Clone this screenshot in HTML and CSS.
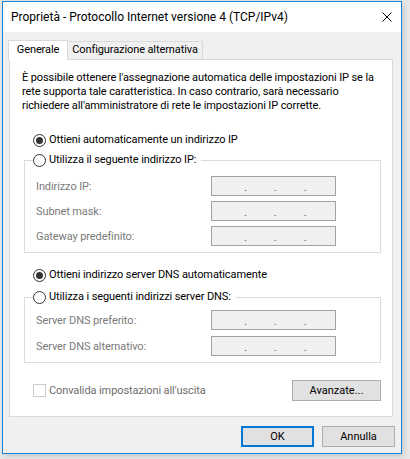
FILE: index.html
```html
<!DOCTYPE html>
<html lang="it">
  <head>
    <meta charset="UTF-8" />
    <title>Proprietà - Protocollo Internet versione 4 (TCP/IPv4)</title>
    <link rel="stylesheet" href="styles.css">
  </head>
  <body>
    <div class="dlg">
      <div class="dlg__title">
        <span>Proprietà - Protocollo Internet versione 4 (TCP/IPv4)</span>
        <svg class="dlg__close" width="10" height="10" viewBox="0 0 10 10">
          <path d="M0.5 0.5 L9.5 9.5 M9.5 0.5 L0.5 9.5" stroke="#000" stroke-width="1" fill="none" />
        </svg>
      </div>

      <div class="tabs">
        <div class="tab tab--active">Generale</div>
        <div class="tab">Configurazione alternativa</div>
      </div>

      <div class="panel">
        <p class="panel__intro">
          È possibile ottenere l'assegnazione automatica delle impostazioni IP se la<br>
          rete supporta tale caratteristica. In caso contrario, sarà necessario<br>
          richiedere all'amministratore di rete le impostazioni IP corrette.
        </p>

        <div class="opt opt--first"><span class="radio radio--on"></span>Ottieni automaticamente un indirizzo IP</div>

        <fieldset class="group group--ip">
          <legend class="opt"><span class="radio"></span>Utilizza il seguente indirizzo IP:</legend>
          <div class="field"><label>Indirizzo IP:</label><div class="ipbox"><span>.</span><span>.</span><span>.</span></div></div>
          <div class="field"><label>Subnet mask:</label><div class="ipbox"><span>.</span><span>.</span><span>.</span></div></div>
          <div class="field"><label>Gateway predefinito:</label><div class="ipbox"><span>.</span><span>.</span><span>.</span></div></div>
        </fieldset>

        <div class="opt opt--dns"><span class="radio radio--on"></span>Ottieni indirizzo server DNS automaticamente</div>

        <fieldset class="group group--dns">
          <legend class="opt"><span class="radio"></span>Utilizza i seguenti indirizzi server DNS:</legend>
          <div class="field"><label>Server DNS preferito:</label><div class="ipbox"><span>.</span><span>.</span><span>.</span></div></div>
          <div class="field"><label>Server DNS alternativo:</label><div class="ipbox"><span>.</span><span>.</span><span>.</span></div></div>
        </fieldset>

        <div class="panel__foot">
          <div class="check"><span class="check__box"></span>Convalida impostazioni all'uscita</div>
          <button class="btn btn--adv">Avanzate...</button>
        </div>
      </div>

      <div class="dlg__buttons">
        <button class="btn btn--default">OK</button>
        <button class="btn">Annulla</button>
      </div>
    </div>
  </body>
</html>
```

FILE: styles.css
```css
*,
*::before,
*::after {
  box-sizing: border-box;
  margin: 0;
  padding: 0;
}

:root {
  --accent: #1883d7;
  --face: #f0f0f0;
  --line: #d9d9d9;
  --group: #dcdcdc;
  --muted: #7a7a7a;
  --btn: #e1e1e1;
  --btn-line: #adadad;
}

body {
  background: #e9e9e9;
  font-family: Roboto, "Noto Sans", sans-serif;
  font-size: 11px;
  letter-spacing: -0.1px;
  color: #000;
  height: 459px;
  overflow: hidden;
}

.dlg {
  width: 400px;
  height: 453px;
  margin: 1px 0 0 2px;
  border: 1px solid var(--accent);
  background: var(--face);
  box-shadow: 2px 2px 6px rgba(0, 0, 0, 0.15);
  display: flex;
  flex-direction: column;
}

.dlg__title {
  height: 30px;
  background: #fff;
  display: flex;
  align-items: center;
  justify-content: space-between;
  padding: 0 9px 0 8px;
  font-size: 12px;
  letter-spacing: 0;
}

/* tabs */
.tabs {
  display: flex;
  align-items: flex-end;
  padding: 8px 0 0 5px;
}
.tab {
  height: 18px;
  line-height: 16px;
  border: 1px solid var(--line);
  border-bottom: none;
  border-left: none;
  width: 135px;
  text-align: center;
  white-space: nowrap;
  background: var(--face);
}
.tab--active {
  position: relative;
  z-index: 1;
  height: 20px;
  width: 60px;
  line-height: 18px;
  margin-bottom: -1px;
  border-left: 1px solid var(--line);
  background: #fff;
}

.panel {
  height: 358px;
  margin: 0 8px 0 6px;
  background: #fff;
  border: 1px solid var(--line);
  padding: 11px 11px 0 12px;
}
.panel__intro {
  line-height: 14px;
  white-space: nowrap;
}

/* radio rows */
.opt {
  display: flex;
  align-items: center;
  height: 14px;
  line-height: 14px;
}
.opt--first {
  margin: 20px 0 0 11px;
}
.opt--dns {
  margin: 15px 0 0 11px;
}
.radio {
  width: 13px;
  height: 13px;
  border: 1px solid #333;
  border-radius: 50%;
  margin-right: 3px;
  display: flex;
  align-items: center;
  justify-content: center;
  background: #fff;
}
.radio--on::after {
  content: "";
  width: 7px;
  height: 7px;
  border-radius: 50%;
  background: #333;
}

/* group boxes */
.group {
  border: 1px solid var(--group);
  margin: 6px 0 0 2px;
  padding: 9px 0 6px 0;
}
.group legend {
  margin-left: 8px;
  padding: 0 5px 0 0;
}
.group--dns {
  margin-top: 8px;
  padding-top: 6px;
}
.field {
  display: flex;
  align-items: center;
  height: 20px;
  padding-left: 11px;
  color: var(--muted);
}
.field + .field {
  margin-top: 5px;
}
.group--dns .field + .field {
  margin-top: 6px;
}
.field label {
  width: 175px;
}
.ipbox {
  width: 125px;
  height: 20px;
  border: 1px solid #a2a2a2;
  background: var(--face);
  display: flex;
  gap: 27px;
  padding-left: 32px;
  line-height: 22px;
  color: #555;
}

/* bottom of the tab page */
.panel__foot {
  display: flex;
  align-items: center;
  justify-content: space-between;
  margin: 17px 0 0 11px;
}
.check {
  display: flex;
  align-items: center;
  color: #6d6d6d;
}
.check__box {
  width: 13px;
  height: 13px;
  border: 1px solid #ccc;
  background: #fff;
  margin-right: 3px;
}

.btn {
  font: inherit;
  color: #000;
  background: var(--btn);
  border: 1px solid var(--btn-line);
  width: 73px;
  height: 21px;
}
.btn--adv {
  width: 89px;
}
.btn--default {
  border: 2px solid #0078d7;
}

.dlg__buttons {
  display: flex;
  justify-content: flex-end;
  gap: 8px;
  padding: 9px 6px 0 0;
}
```
